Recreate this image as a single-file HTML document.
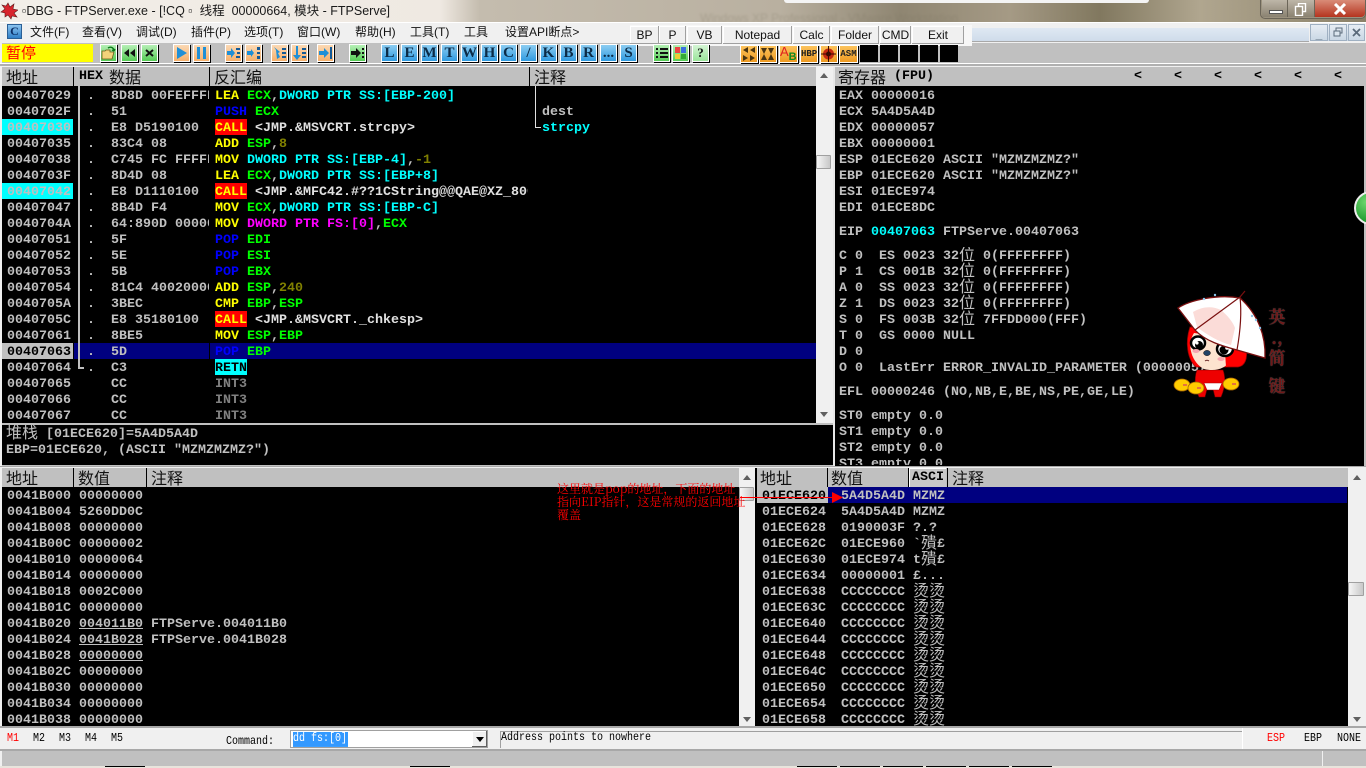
<!DOCTYPE html>
<html lang="zh"><head><meta charset="utf-8"><title>OllyDBG - FTPServer.exe</title>
<style>
html,body{margin:0;padding:0;width:1366px;height:768px;overflow:hidden;background:#f0f0f0}
body{position:relative;font-family:"Liberation Sans","Noto Sans CJK SC",sans-serif}
.a{position:absolute}
pre{position:absolute;z-index:0;margin:0;padding-top:2px;font:bold 13.33px/16px "Liberation Mono","WenQuanYi Zen Hei",monospace;color:#c0c0c0;overflow:hidden;white-space:pre}
pre i{font:normal 16px/16px "WenQuanYi Zen Hei","Noto Sans CJK SC",sans-serif;display:inline-block;width:16px;vertical-align:top;position:relative;top:-4px}
.k{background:#000}
.y{color:#ff0}.g{color:#0f0}.c{color:#0ff}.b{color:#00f}.o{color:#808000}.m{color:#f0f}.w{color:#e0e0e0}.d{color:#808080}
.cl,.rt{position:relative;display:inline-block;width:32px}
.cl{color:#ff0}.rt{color:#000}
.cl::before,.rt::before{content:"";position:absolute;left:-1px;top:-2px;width:33px;height:16px;z-index:-1}
.cl::before{background:#f00}.rt::before{background:#0ff}
.h{position:absolute;height:19px;background:#c0c0c0}
.ht{position:absolute;top:-1px;font:normal 16px/20px "WenQuanYi Zen Hei","Noto Sans CJK SC",sans-serif;color:#111;white-space:nowrap}
.sp{position:absolute;top:0;width:1px;height:19px;background:#000}
.mn{position:absolute;top:24px;font-size:12px;line-height:16px;color:#111;white-space:nowrap}
.tb{position:absolute;top:26px;height:18px;font-size:12px;line-height:18px;text-align:center;color:#111;background:#f0f0f0;box-shadow:inset -1px -1px #a0a0a0,inset 1px 1px #fff}
.t{position:absolute;top:44px;width:15px;height:16px;border:1px solid #fff;box-shadow:1px 1px #000;overflow:hidden;text-align:center}
.bl{background:linear-gradient(#8ccdf2,#2f9ae0);font:bold 15px/17px "Liberation Serif",serif;color:#0b2b47}
.or{background:linear-gradient(#fbd9b5,#f6b06c)}
.gr{background:linear-gradient(#b6f0b6,#55cc55)}
.as{background:linear-gradient(#fcc35c,#ee9a22);font:bold 9px/17px "Liberation Mono",monospace;color:#222}
.t svg{display:block;width:15px;height:16px}
.blk{position:absolute;top:45px;width:18px;height:17px;background:#000}
.sb{position:absolute;background:#f0f0f0}
.ar{position:absolute;width:0;height:0;border-left:4px solid transparent;border-right:4px solid transparent}
.th{position:absolute;width:15px;height:14px;background:linear-gradient(90deg,#f6f6f6,#c8c8c8);border:1px solid #a0a0a0;border-radius:1px;box-sizing:border-box}
.st{position:absolute;font:10px/12px "Liberation Mono",monospace;color:#000;white-space:nowrap;transform:scaleY(1.15);transform-origin:0 0}
.vt{position:absolute;left:1266px;width:22px;font:bold 17px/20px "Noto Serif CJK SC",serif;color:#701818;text-shadow:0 0 1px #888;text-align:center}
</style></head><body>

<!-- Title bar -->
<div class="a" style="left:0;top:0;width:1366px;height:22px;background:linear-gradient(90deg,#f2eee8 0,#efe9e2 440px,#c4bcae 480px,#b9b0a0 780px,#8f8672 900px,#a59a85 1010px,#81785f 1100px,#b0a68f 1200px,#8a8068 1366px)"></div>
<div class="a" style="left:784px;top:0;width:365px;height:3px;background:#f4f4f4;border-radius:0 0 4px 4px"></div>
<div class="a" style="left:700px;top:11px;color:#7a7360;font-size:12px;line-height:14px;white-space:nowrap;opacity:.3;filter:blur(1px)">Windows XP Professional - VMware Workstation</div>
<svg class="a" style="left:0;top:2px" width="18" height="18" viewBox="0 0 18 18"><path d="M8 1l2 4 4-3-1 5 5 1-4 3 3 4-5-1-1 3-3-4-3 2 0-4-4-1 4-3-3-4 4 1z" fill="#d8242c" stroke="#5a1a1a" stroke-width=".6"/></svg>
<div class="a" style="left:22px;top:4px;font-size:12.5px;line-height:15px;color:#1a1a1a;white-space:nowrap">▫DBG - FTPServer.exe - [!CQ ▫&nbsp; 线程&nbsp; 00000664, 模块 - FTPServe]</div>
<div class="a" style="left:1260px;top:0;width:106px;height:19px;border:1px solid #6b6558;border-top:0;box-sizing:border-box;border-radius:0 0 5px 5px;background:#9b927f"></div>
<div class="a" style="left:1262px;top:0;width:26px;height:17px;background:linear-gradient(#bdb6a8,#8a8271);box-shadow:inset -1px 0 #6b6558"></div>
<div class="a" style="left:1269px;top:10px;width:12px;height:2px;background:#fff;border:1px solid #555"></div>
<div class="a" style="left:1288px;top:0;width:27px;height:17px;background:linear-gradient(#bdb6a8,#8a8271);box-shadow:inset -1px 0 #6b6558"></div>
<svg class="a" style="left:1294px;top:3px" width="14" height="13" viewBox="0 0 14 13"><rect x="4.500" y=".5" width="7" height="8" fill="none" stroke="#fff" stroke-width="1.4"/><rect x="1.500" y="3.500" width="7" height="9" fill="#9b927f" stroke="#fff" stroke-width="1.4"/></svg>
<div class="a" style="left:1315px;top:0;width:50px;height:17px;background:linear-gradient(#d98c78,#b5341f);border-radius:0 0 4px 0"></div>
<svg class="a" style="left:1333px;top:3px" width="14" height="12" viewBox="0 0 14 12"><path d="M2 1l10 10M12 1L2 11" stroke="#fff" stroke-width="3"/></svg>

<!-- Menu bar -->
<div class="a" style="left:0;top:22px;width:1366px;height:21px;background:#f0f0f0;border-top:1px solid #fff;box-sizing:border-box"></div>
<div class="a" style="left:7px;top:24px;width:15px;height:15px;background:linear-gradient(#8cc4ee,#2f7fc8);border:1px solid #2a5f96;box-sizing:border-box;font:bold 12px/13px 'Liberation Serif',serif;color:#0c2f66;text-align:center">C</div>
<div class="mn" style="left:30px">文件(F)</div>
<div class="mn" style="left:82px">查看(V)</div>
<div class="mn" style="left:136px">调试(D)</div>
<div class="mn" style="left:191px">插件(P)</div>
<div class="mn" style="left:244px">选项(T)</div>
<div class="mn" style="left:297px">窗口(W)</div>
<div class="mn" style="left:355px">帮助(H)</div>
<div class="mn" style="left:410px">工具(T)</div>
<div class="mn" style="left:464px">工具</div>
<div class="mn" style="left:505px">设置API断点&gt;</div>
<div class="a" style="left:966px;top:28px;width:343px;height:13px;background:linear-gradient(#dfe8f3,#cfdcea);box-shadow:0 1px #a8a8a8"></div>
<div class="a" style="left:1310px;top:24px;width:55px;height:17px;background:linear-gradient(#e8eef5,#c8d6e4)"></div>
<div class="a" style="left:1310px;top:24px;width:18px;height:17px;border:1px solid #9fb0c2;box-sizing:border-box;font:bold 12px/18px 'Liberation Sans';color:#5a6a7a;text-align:center">_</div>
<div class="a" style="left:1329px;top:24px;width:18px;height:17px;border:1px solid #9fb0c2;box-sizing:border-box"></div>
<svg class="a" style="left:1333px;top:27px" width="10" height="10" viewBox="0 0 10 10"><rect x="3" y="1" width="6" height="5" fill="none" stroke="#5a6a7a"/><rect x="1" y="4" width="6" height="5" fill="#dbe5ee" stroke="#5a6a7a"/></svg>
<div class="a" style="left:1348px;top:24px;width:17px;height:17px;border:1px solid #9fb0c2;box-sizing:border-box"></div>
<svg class="a" style="left:1352px;top:28px" width="9" height="9" viewBox="0 0 9 9"><path d="M1 1l7 7M8 1L1 8" stroke="#5a6a7a" stroke-width="1.8"/></svg>

<!-- Toolbar -->
<div class="a" style="left:2px;top:43px;width:1364px;height:20px;background:#c0c0c0"></div>
<div class="a" style="left:0;top:63px;width:1366px;height:1px;background:#fff"></div>
<div class="a" style="left:0;top:64px;width:1366px;height:2px;background:#b0b0b0"></div>
<div class="a" style="left:2px;top:44px;width:91px;height:18px;background:#ff0;color:#f00;font:15px/18px 'WenQuanYi Zen Hei','Noto Sans CJK SC',sans-serif;padding-left:4px;box-sizing:border-box">暂停</div>

<!-- Popup tool buttons -->
<div class="a" style="left:630px;top:25px;width:342px;height:21px;background:#f7f7f7"></div>
<div class="tb" style="left:630px;width:29px">BP</div>
<div class="tb" style="left:659px;width:27px">P</div>
<div class="tb" style="left:687px;width:35px">VB</div>
<div class="tb" style="left:723px;width:69px">Notepad</div>
<div class="tb" style="left:793px;width:37px">Calc</div>
<div class="tb" style="left:831px;width:48px">Folder</div>
<div class="tb" style="left:880px;width:31px">CMD</div>
<div class="tb" style="left:912px;width:52px">Exit</div>

<div class="t gr" style="left:100px"><svg viewBox="0 0 15 16"><path d="M1 14V6h3l1-1h4v2h4l-2 7z" fill="#f3d27a" stroke="#6b5a1a" stroke-width=".8"/><path d="M7 3c3-2 6 0 6 3M13 6l-2-1M13 6l1-2" fill="none" stroke="#0b7a1a" stroke-width="1.4"/></svg></div>
<div class="t gr" style="left:121px"><svg viewBox="0 0 15 16"><path d="M7 4v8L2 8zM13 4v8L8 8z" fill="#111"/></svg></div>
<div class="t gr" style="left:141px"><svg viewBox="0 0 15 16"><path d="M4 5l7 6M11 5l-7 6" stroke="#111" stroke-width="2"/></svg></div>
<div class="t or" style="left:173px"><svg viewBox="0 0 15 16"><path d="M3 2v12l10-6z" fill="#1f8fd6"/></svg></div>
<div class="t or" style="left:193px"><svg viewBox="0 0 15 16"><path d="M3 2h3v12H3zM9 2h3v12H9z" fill="#1f8fd6"/></svg></div>
<div class="t or" style="left:225px"><svg viewBox="0 0 15 16"><path d="M1 6h4V3l4 5-4 5v-3H1z" fill="#1f8fd6"/><path d="M10 3h4v2h-4zM11 7h3v2h-3zM10 11h4v2h-4z" fill="#155a96"/></svg></div>
<div class="t or" style="left:245px"><svg viewBox="0 0 15 16"><path d="M1 6h4V4l3 4-3 4v-2H1z" fill="#1f8fd6"/><path d="M11 2h3v3h-3zM11 7h3v2h-3zM11 11h3v3h-3z" fill="#155a96"/></svg></div>
<div class="t or" style="left:271px"><svg viewBox="0 0 15 16"><path d="M2 2l6 5-2 1 2 4-3 2-1-9z" fill="#1f8fd6"/><path d="M10 3h4v2h-4zM10 7h4v2h-4zM10 11h4v2h-4z" fill="#155a96"/></svg></div>
<div class="t or" style="left:291px"><svg viewBox="0 0 15 16"><path d="M4 1v9H1l4 5 4-5H6V1z" fill="#1f8fd6"/><path d="M10 3h4v2h-4zM10 7h4v2h-4zM10 11h4v2h-4z" fill="#155a96"/></svg></div>
<div class="t or" style="left:317px"><svg viewBox="0 0 15 16"><path d="M1 6h5V3l5 5-5 5v-3H1z" fill="#1f8fd6"/><path d="M12 2h2v12h-2z" fill="#155a96"/></svg></div>
<div class="t gr" style="left:349px"><svg viewBox="0 0 15 16"><path d="M1 6h5V3l5 5-5 5v-3H1z" fill="#111"/><path d="M12 3h2v2h-2zM12 7h2v2h-2zM12 11h2v2h-2z" fill="#111"/></svg></div>

<div class="t bl" style="left:381px">L</div>
<div class="t bl" style="left:401px">E</div>
<div class="t bl" style="left:421px">M</div>
<div class="t bl" style="left:441px">T</div>
<div class="t bl" style="left:461px">W</div>
<div class="t bl" style="left:481px">H</div>
<div class="t bl" style="left:500px">C</div>
<div class="t bl" style="left:520px">/</div>
<div class="t bl" style="left:540px">K</div>
<div class="t bl" style="left:560px">B</div>
<div class="t bl" style="left:580px">R</div>
<div class="t bl" style="left:600px">...</div>
<div class="t bl" style="left:620px">S</div>
<div class="t gr" style="left:653px"><svg viewBox="0 0 15 16"><path d="M2 3h2v2H2zM6 3h8v2H6zM2 7h2v2H2zM6 7h8v2H6zM2 11h2v2H2zM6 11h8v2H6z" fill="#111"/></svg></div>
<div class="t gr" style="left:672px"><svg viewBox="0 0 15 16"><path d="M2 2h5v6H2z" fill="#e44"/><path d="M8 2h5v6H8z" fill="#3a6fe0"/><path d="M2 9h5v5H2z" fill="#ec3"/><path d="M8 9h5v5H8z" fill="#3a3"/></svg></div>
<div class="t gr" style="left:692px;font:bold 13px/16px 'Liberation Serif',serif;color:#111;background:linear-gradient(#d4f5d4,#9ae59a)">?</div>

<div class="t as" style="left:740px;top:45px;width:16px"><svg viewBox="0 0 15 16"><path d="M7 1v6L2 4zM14 1v6L9 4zM2 9v6l5-3zM9 9v6l5-3z" fill="#4a3512"/></svg></div>
<div class="t as" style="left:759px;top:45px;width:16px"><svg viewBox="0 0 15 16"><path d="M1 2h6L4 8zM8 2h6l-3 6zM4 8l3 6H1zM11 8l3 6H8z" fill="#4a3512"/></svg></div>
<div class="t as" style="left:779px;top:45px;width:17px;font:13px/12px 'Liberation Sans',sans-serif;color:#e02020;text-align:left">A<span style="color:#128a20;font-size:11px;font-weight:bold;position:relative;top:4px">B</span></div>
<div class="t as" style="left:800px;top:45px;width:16px">HBP</div>
<div class="t as" style="left:820px;top:45px;width:16px"><svg viewBox="0 0 15 16"><circle cx="7.500" cy="8" r="5.500" fill="#c52a10"/><circle cx="7.500" cy="8" r="2.500" fill="#3a0a00"/><path d="M7.500 0v16M0 8h15" stroke="#3a0a00"/></svg></div>
<div class="t as" style="left:839px;top:45px;width:17px">ASM</div>
<div class="blk" style="left:860px"></div><div class="blk" style="left:880px"></div><div class="blk" style="left:900px"></div><div class="blk" style="left:920px"></div><div class="blk" style="left:940px"></div>

<!-- Main workspace frame -->
<div class="a" style="left:2px;top:67px;width:1364px;height:682px;background:#c0c0c0"></div>

<!-- CPU disasm pane -->
<div class="h" style="left:2px;top:67px;width:814px">
<div class="ht" style="left:4px">地址</div>
<pre style="left:77px;top:0;width:30px;height:16px;color:#000">HEX</pre>
<div class="ht" style="left:107px">数据</div>
<div class="ht" style="left:212px">反汇编</div>
<div class="ht" style="left:532px">注释</div>
<div class="sp" style="left:71px"></div><div class="sp" style="left:207px"></div><div class="sp" style="left:527px"></div>
</div>
<div class="a k" style="left:2px;top:86px;width:814px;height:337px"></div>
<div class="a" style="left:2px;top:119px;width:71px;height:16px;background:#0ff"></div>
<div class="a" style="left:2px;top:183px;width:71px;height:16px;background:#0ff"></div>
<div class="a" style="left:2px;top:343px;width:71px;height:16px;background:#c0c0c0"></div>
<div class="a" style="left:74px;top:343px;width:742px;height:16px;background:#000080"></div>
<div class="a k" style="left:209px;top:343px;width:1px;height:16px"></div>
<div class="a" style="left:78px;top:86px;width:2px;height:283px;background:#c0c0c0"></div>
<div class="a" style="left:78px;top:367px;width:6px;height:2px;background:#c0c0c0"></div>
<div class="a" style="left:535px;top:86px;width:1px;height:42px;background:#e0e0e0"></div>
<div class="a" style="left:535px;top:127px;width:6px;height:1px;background:#e0e0e0"></div>

<pre style="left:7px;top:87px;width:66px;height:334px">00407029
0040702F
00407030
00407035
00407038
0040703F
00407042
00407047
0040704A
00407051
00407052
00407053
00407054
0040705A
0040705C
00407061
<span style="color:#000">00407063</span>
00407064
00407065
00407066
00407067</pre>
<pre style="left:87px;top:87px;width:16px;height:334px">.
.
.
.
.
.
.
.
.
.
.
.
.
.
.
.
.
.</pre>
<pre style="left:111px;top:87px;width:98px;height:334px">8D8D 00FEFFFF
51
E8 D5190100
83C4 08
C745 FC FFFFFFFF
8D4D 08
E8 D1110100
8B4D F4
64:890D 00000000
5F
5E
5B
81C4 40020000
3BEC
E8 35180100
8BE5
5D
C3
CC
CC
CC</pre>
<pre style="left:215px;top:87px;width:313px;height:334px"><span class="y">LEA</span> <span class="g">ECX</span>,<span class="c">DWORD PTR SS:[EBP-200]</span>
<span class="b">PUSH</span> <span class="g">ECX</span>
<span class="cl">CALL</span> <span class="w">&lt;JMP.&amp;MSVCRT.strcpy&gt;</span>
<span class="y">ADD</span> <span class="g">ESP</span>,<span class="o">8</span>
<span class="y">MOV</span> <span class="c">DWORD PTR SS:[EBP-4]</span>,<span class="o">-1</span>
<span class="y">LEA</span> <span class="g">ECX</span>,<span class="c">DWORD PTR SS:[EBP+8]</span>
<span class="cl">CALL</span> <span class="w">&lt;JMP.&amp;MFC42.#??1CString@@QAE@XZ_800&gt;</span>
<span class="y">MOV</span> <span class="g">ECX</span>,<span class="c">DWORD PTR SS:[EBP-C]</span>
<span class="y">MOV</span> <span class="m">DWORD PTR FS:[0]</span>,<span class="g">ECX</span>
<span class="b">POP</span> <span class="g">EDI</span>
<span class="b">POP</span> <span class="g">ESI</span>
<span class="b">POP</span> <span class="g">EBX</span>
<span class="y">ADD</span> <span class="g">ESP</span>,<span class="o">240</span>
<span class="y">CMP</span> <span class="g">EBP</span>,<span class="g">ESP</span>
<span class="cl">CALL</span> <span class="w">&lt;JMP.&amp;MSVCRT._chkesp&gt;</span>
<span class="y">MOV</span> <span class="g">ESP</span>,<span class="g">EBP</span>
<span class="b">POP</span> <span class="g">EBP</span>
<span class="rt">RETN</span>
<span class="d">INT3</span>
<span class="d">INT3</span>
<span class="d">INT3</span></pre>
<pre style="left:542px;top:103px;width:80px;height:32px">dest
<span class="c">strcpy</span></pre>

<!-- disasm scrollbar -->
<div class="sb" style="left:816px;top:67px;width:17px;height:356px"></div>
<div class="ar" style="left:820px;top:73px;border-bottom:5px solid #606060"></div>
<div class="ar" style="left:820px;top:412px;border-top:5px solid #606060"></div>
<div class="th" style="left:816px;top:155px"></div>

<!-- Registers -->
<div class="a" style="left:833px;top:67px;width:2px;height:400px;background:#e8e8e8"></div>
<div class="h" style="left:835px;top:67px;width:531px">
<div class="ht" style="left:3px">寄存器</div>
<pre style="left:59px;top:0;width:60px;height:16px;color:#000">(FPU)</pre>
<pre style="left:299px;top:0;width:230px;height:16px;color:#000">&lt;    &lt;    &lt;    &lt;    &lt;    &lt;</pre>
</div>
<div class="a k" style="left:835px;top:86px;width:529px;height:380px"></div>
<pre style="left:839px;top:87px;width:520px;height:128px">EAX 00000016
ECX 5A4D5A4D
EDX 00000057
EBX 00000001
ESP 01ECE620 ASCII "MZMZMZMZ?"
EBP 01ECE620 ASCII "MZMZMZMZ?"
ESI 01ECE974
EDI 01ECE8DC</pre>
<pre style="left:839px;top:223px;width:520px;height:16px">EIP <span class="c">00407063</span> FTPServe.00407063</pre>
<pre style="left:839px;top:247px;width:520px;height:128px">C 0  ES 0023 32<i>位</i> 0(FFFFFFFF)
P 1  CS 001B 32<i>位</i> 0(FFFFFFFF)
A 0  SS 0023 32<i>位</i> 0(FFFFFFFF)
Z 1  DS 0023 32<i>位</i> 0(FFFFFFFF)
S 0  FS 003B 32<i>位</i> 7FFDD000(FFF)
T 0  GS 0000 NULL
D 0
O 0  LastErr ERROR_INVALID_PARAMETER (00000057)</pre>
<pre style="left:839px;top:383px;width:520px;height:16px">EFL 00000246 (NO,NB,E,BE,NS,PE,GE,LE)</pre>
<pre style="left:839px;top:407px;width:520px;height:56px">ST0 empty 0.0
ST1 empty 0.0
ST2 empty 0.0
ST3 empty 0.0</pre>

<!-- Mascot -->
<svg class="a" style="left:1170px;top:288px" width="110" height="115" viewBox="1170 288 110 115">
<path d="M1190 327c-5 15-3 32 6 40h42c7-1 10-8 8-20l-12-14z" fill="#f00" stroke="#900" stroke-width=".8"/>
<path d="M1197 370h26c3 8 2 18-2 27h-6l-2-8h-6l-2 8h-6c-4-9-5-19-2-27z" fill="#ee0000" stroke="#700" stroke-width=".6"/>
<path d="M1204 383h18l-3 7h-12z" fill="#fff" stroke="#a00" stroke-width=".5"/>
<circle cx="1200" cy="375" r="4" fill="#ee0000"/>
<path d="M1194 333c-8 12-2 30 10 36 12 3 22-1 26-8 2-10 0-18-6-24z" fill="#fde3cf"/>
<path d="M1225 352l15-5v17l-14 3z" fill="#f00"/>
<ellipse cx="1198" cy="343" rx="7" ry="6.500" fill="#fff" stroke="#000" stroke-width="2.500"/>
<ellipse cx="1199" cy="345" rx="4" ry="4" fill="#000"/><circle cx="1197" cy="343" r="1.600" fill="#fff"/>
<ellipse cx="1225" cy="349" rx="8" ry="7" fill="#fff" stroke="#000" stroke-width="2.500"/>
<ellipse cx="1224" cy="350" rx="4.500" ry="4.500" fill="#000"/><circle cx="1227" cy="348" r="1.800" fill="#fff"/>
<ellipse cx="1207" cy="353" rx="3.400" ry="2.600" fill="#246" stroke="#000" stroke-width=".5"/>
<ellipse cx="1196" cy="351" rx="3.600" ry="2" fill="#f6a8b0"/>
<ellipse cx="1221" cy="359" rx="3.600" ry="2" fill="#f6a8b0"/>
<path d="M1205 361q2-1.500 4 0" stroke="#622" fill="none"/>
<path d="M1178 308c12-8 40-14 62-10 18 16 26 38 25 60l-28-8c-15-4-32-9-42-20z" fill="#fff" stroke="#7a1010" stroke-width="1.300"/>
<path d="M1193 312c10-6 20-6 28-2 6 5 12 12 14 18l-4 17c-12-3-24-10-34-18z" fill="#fbdcd8"/>
<path d="M1240 297l-45 33M1240 297c2 18 0 36-3 53M1240 297l5-6" stroke="#7a1010" stroke-width="1.200" fill="none"/>
<circle cx="1204" cy="299" r="1.200" fill="#8bc5ea"/><circle cx="1215" cy="295" r="1.200" fill="#8bc5ea"/><circle cx="1252" cy="316" r="1.200" fill="#8bc5ea"/><circle cx="1256" cy="320" r="1.200" fill="#8bc5ea"/><circle cx="1260" cy="328" r="1.200" fill="#8bc5ea"/>
<ellipse cx="1182" cy="385" rx="8" ry="6" fill="#fc0" stroke="#a60" stroke-width=".8"/>
<ellipse cx="1196" cy="388" rx="8" ry="6" fill="#fc0" stroke="#a60" stroke-width=".8"/>
<ellipse cx="1231" cy="384" rx="8" ry="6" fill="#fc0" stroke="#a60" stroke-width=".8"/>
<path d="M1183 385h4M1197 388h4M1232 384h4" stroke="#d55" stroke-width="1.500"/>
</svg>
<div class="vt" style="top:306px">英</div>
<div class="vt" style="top:327px">.,</div>
<div class="vt" style="top:347px">简</div>
<div class="vt" style="top:375px">键</div>

<!-- Green ball -->
<div class="a" style="left:1354px;top:191px;width:12px;height:35px;overflow:hidden"><div style="width:30px;height:30px;border:2px solid #eee;border-radius:50%;background:radial-gradient(circle at 35% 30%,#6fd86f,#1f9a2f 70%);box-sizing:content-box"></div></div>

<!-- Info pane -->
<div class="a" style="left:2px;top:423px;width:831px;height:2px;background:#c0c0c0"></div>
<div class="a k" style="left:2px;top:425px;width:831px;height:40px"></div>
<pre style="left:6px;top:425px;width:820px;height:38px"><i>堆</i><i>栈</i> [01ECE620]=5A4D5A4D
EBP=01ECE620, (ASCII "MZMZMZMZ?")</pre>

<!-- Splitter -->
<div class="a" style="left:0;top:466px;width:1366px;height:1px;background:#a8a8a8"></div>
<div class="a" style="left:0;top:467px;width:1366px;height:1px;background:#f0f0f0"></div>

<!-- Dump pane -->
<div class="h" style="left:2px;top:468px;width:737px">
<div class="ht" style="left:4px">地址</div>
<div class="ht" style="left:76px">数值</div>
<div class="ht" style="left:149px">注释</div>
<div class="sp" style="left:71px"></div><div class="sp" style="left:144px"></div>
</div>
<div class="a k" style="left:2px;top:487px;width:737px;height:239px"></div>
<pre style="left:7px;top:487px;width:730px;height:237px">0041B000 00000000
0041B004 5260DD0C
0041B008 00000000
0041B00C 00000002
0041B010 00000064
0041B014 00000000
0041B018 0002C000
0041B01C 00000000
0041B020 <u>004011B0</u> FTPServe.004011B0
0041B024 <u>0041B028</u> FTPServe.0041B028
0041B028 <u>00000000</u>
0041B02C 00000000
0041B030 00000000
0041B034 00000000
0041B038 00000000</pre>
<div class="sb" style="left:739px;top:468px;width:16px;height:258px"></div>
<div class="ar" style="left:743px;top:475px;border-bottom:5px solid #606060"></div>
<div class="ar" style="left:743px;top:717px;border-top:5px solid #606060"></div>
<div class="th" style="left:739px;top:487px"></div>
<div class="a k" style="left:755px;top:468px;width:2px;height:258px"></div>

<!-- Stack pane -->
<div class="h" style="left:757px;top:468px;width:591px">
<div class="ht" style="left:3px">地址</div>
<div class="ht" style="left:74px">数值</div>
<div class="a" style="left:152px;top:0;width:37px;height:19px;background:#c8c8c8;box-shadow:inset 1px 1px #fff"></div>
<pre style="left:155px;top:0;width:34px;height:16px;color:#000">ASCI</pre>
<div class="ht" style="left:195px">注释</div>
<div class="sp" style="left:70px"></div><div class="sp" style="left:151px"></div><div class="sp" style="left:190px"></div>
</div>
<div class="a k" style="left:757px;top:487px;width:591px;height:239px"></div>
<div class="a" style="left:757px;top:487px;width:71px;height:16px;background:#c0c0c0"></div>
<div class="a" style="left:828px;top:487px;width:519px;height:16px;background:#000080"></div>
<pre style="left:762px;top:487px;width:66px;height:237px"><span style="color:#000">01ECE620</span>
01ECE624
01ECE628
01ECE62C
01ECE630
01ECE634
01ECE638
01ECE63C
01ECE640
01ECE644
01ECE648
01ECE64C
01ECE650
01ECE654
01ECE658</pre>
<pre style="left:841px;top:487px;width:66px;height:237px">5A4D5A4D
5A4D5A4D
0190003F
01ECE960
01ECE974
00000001
CCCCCCCC
CCCCCCCC
CCCCCCCC
CCCCCCCC
CCCCCCCC
CCCCCCCC
CCCCCCCC
CCCCCCCC
CCCCCCCC</pre>
<pre style="left:913px;top:487px;width:100px;height:237px">MZMZ
MZMZ
?.?
`<i>殨</i>£
t<i>殨</i>£
£...
<i>烫</i><i>烫</i>
<i>烫</i><i>烫</i>
<i>烫</i><i>烫</i>
<i>烫</i><i>烫</i>
<i>烫</i><i>烫</i>
<i>烫</i><i>烫</i>
<i>烫</i><i>烫</i>
<i>烫</i><i>烫</i>
<i>烫</i><i>烫</i></pre>
<div class="sb" style="left:1348px;top:468px;width:18px;height:258px"></div>
<div class="ar" style="left:1353px;top:475px;border-bottom:5px solid #606060"></div>
<div class="ar" style="left:1353px;top:717px;border-top:5px solid #606060"></div>
<div class="th" style="left:1348px;top:582px;width:16px"></div>

<!-- Annotation -->
<div class="a" style="left:557px;top:482px;width:210px;font:12px/13px 'Noto Serif CJK SC','Liberation Serif',serif;color:#f00;white-space:nowrap">这里就是pop的地址，下面的地址<br>指向EIP指针，这是常规的返回地址<br>覆盖</div>
<div class="a" style="left:740px;top:497px;width:95px;height:1px;background:#f00"></div>
<svg class="a" style="left:832px;top:492px" width="11" height="11" viewBox="0 0 11 11"><path d="M0 0l11 5.500L0 11z" fill="#f00"/></svg>

<!-- Command bar -->
<div class="a" style="left:0;top:726px;width:1366px;height:2px;background:#a8a8a8"></div>
<div class="a" style="left:0;top:728px;width:1366px;height:21px;background:#f0f0f0"></div>
<div class="st" style="left:7px;top:733px;color:#f00">M1</div>
<div class="st" style="left:33px;top:733px">M2</div>
<div class="st" style="left:59px;top:733px">M3</div>
<div class="st" style="left:85px;top:733px">M4</div>
<div class="st" style="left:111px;top:733px">M5</div>
<div class="st" style="left:226px;top:736px">Command:</div>
<div class="a" style="left:290px;top:730px;width:198px;height:18px;background:#fff;border:1px solid #a0a0a0;box-sizing:border-box"></div>
<div class="st" style="left:293px;top:732px;width:55px;background:#3399ff;color:#fff;line-height:13px">dd fs:[0]</div>
<div class="a" style="left:472px;top:731px;width:15px;height:16px;background:#f0f0f0;box-shadow:inset -1px -1px #606060,inset 1px 1px #fff"></div>
<div class="ar" style="left:476px;top:737px;border-top:5px solid #000"></div>
<div class="a" style="left:500px;top:731px;width:742px;height:1px;background:#a0a0a0"></div>
<div class="a" style="left:500px;top:731px;width:1px;height:17px;background:#a0a0a0"></div>
<div class="st" style="left:501px;top:732px">Address points to nowhere</div>
<div class="a" style="left:1242px;top:728px;width:1px;height:21px;background:#fff"></div>
<div class="st" style="left:1267px;top:733px;color:#f00">ESP</div>
<div class="st" style="left:1304px;top:733px">EBP</div>
<div class="st" style="left:1337px;top:733px">NONE</div>

<!-- Status bar -->
<div class="a" style="left:0;top:749px;width:1366px;height:2px;background:#a8a8a8"></div>
<div class="a" style="left:2px;top:751px;width:1364px;height:15px;background:#c0c0c0"></div>
<div class="a" style="left:1322px;top:751px;width:1px;height:15px;background:#f0f0f0"></div>
<div class="a" style="left:0;top:766px;width:1366px;height:2px;background:#e8e4dc"></div>
<div class="a k" style="left:105px;top:766px;width:40px;height:1px"></div>
<div class="a k" style="left:410px;top:766px;width:40px;height:1px"></div>
<div class="a k" style="left:797px;top:766px;width:40px;height:1px"></div>
<div class="a k" style="left:840px;top:766px;width:40px;height:1px"></div>
<div class="a k" style="left:883px;top:766px;width:40px;height:1px"></div>
<div class="a k" style="left:926px;top:766px;width:40px;height:1px"></div>
<div class="a k" style="left:969px;top:766px;width:40px;height:1px"></div>
<div class="a k" style="left:1012px;top:766px;width:40px;height:1px"></div>
</body></html>
